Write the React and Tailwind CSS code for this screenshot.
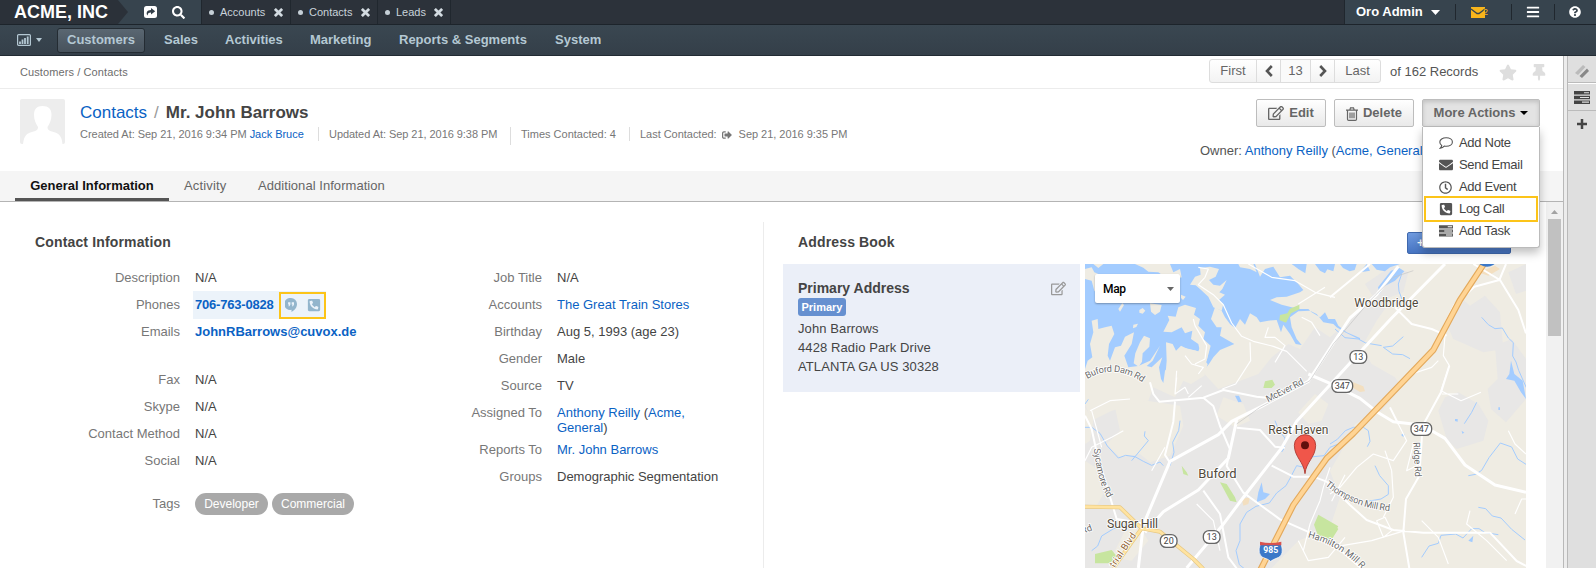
import React from "react";
import {
  FaSearch, FaBars, FaQuestionCircle, FaStar, FaThumbtack, FaRegEdit,
  FaRegClock, FaEnvelope, FaPhoneSquare, FaSignOutAlt,
} from "react-icons/fa";

const TasksIcon = ({ className }) => (
  <svg viewBox="0 0 16 13" className={className} fill="currentColor">
    <path fillRule="evenodd" d="M0 0h16v3.5H0zM10 1.2v1.1h5V1.2zM0 4.7h16v3.5H0zM6 5.9V7h9V5.9zM0 9.4h16v3.5H0zM8 10.6v1.1h7v-1.1z" />
  </svg>
);

const CloseIcon = () => (
  <svg viewBox="0 0 10 10" className="size-[9px] shrink-0 text-[#d3dbe1]" stroke="currentColor" strokeWidth="3">
    <path d="M1 1l8 8M9 1l-8 8" />
  </svg>
);

const ChevronIcon = ({ className }) => (
  <svg viewBox="0 0 8 12" className={className} fill="none" stroke="currentColor" strokeWidth="2.600">
    <path d="M6.800 1L2 6l4.800 5" />
  </svg>
);

const TrashIcon = () => (
  <svg viewBox="0 0 12 14" className="mr-[5px] mt-0.5 h-[14px] w-3" fill="none" stroke="currentColor" strokeWidth="1.200">
    <path d="M0 3.200h12M1.500 3.200v9a1.200 1.200 0 0 0 1.200 1.200h6.600a1.200 1.200 0 0 0 1.200-1.200v-9M3.800 3L4.500.8h3L8.200 3M4 5.500v5.700M6 5.500v5.700M8 5.500v5.700" />
  </svg>
);

const ShareIcon = () => (
  <svg viewBox="0 0 13 12" className="h-3 w-[13px]">
    <rect width="13" height="12" rx="2.5" fill="#fff" />
    <path d="M7 2l4.200 3.200L7 8.400V6.500c-2 0-3.200.6-3.400 3C1.600 7 3 3.900 7 3.900z" fill="#333f49" />
  </svg>
);

const Caret = ({ className }) => (
  <svg viewBox="0 0 8 4" className={className} fill="currentColor" preserveAspectRatio="none"><path d="M0 0h8L4 4z" /></svg>
);

const HangoutsIcon = () => (
  <svg viewBox="0 0 12 14" className="h-[14px] w-3">
    <path d="M6 0a6 6 0 0 1 6 6c0 3.500-2.500 6.500-5.500 8v-2.200A6 6 0 1 1 6 0z" fill="#93b5cc" />
    <path d="M3.100 4.200h2.300v2.400L4.400 8.200h-1l.6-1.600h-.9zM6.700 4.200H9v2.400L8 8.200H7l.6-1.600h-.9z" fill="#ecf3fa" />
  </svg>
);

const PinTab = ({ label, w }) => (
  <div className={`flex h-full items-center border-r border-[#20272e] pl-[7px] ${w}`}>
    <span className="mr-1.5 size-[5px] rounded-full bg-[#c6d0d7]" />
    <span className="flex-1 text-[11px] text-[#c9d3da]">{label}</span>
    <span className="mr-[7px]"><CloseIcon /></span>
  </div>
);

const NavItem = ({ label, w }) => (
  <span className={`shrink-0 whitespace-nowrap text-[13px] font-bold text-[#b4c8d3] ${w}`}>{label}</span>
);

const A = ({ children }) => <a className="text-[#0a62c4]">{children}</a>;

const Row = ({ label, children, h = "h-[27px]" }) => (
  <div className={`flex ${h}`}>
    <span className="w-[145px] shrink-0 pt-1 text-right leading-[15px] text-[#777]">{label}</span>
    <span className="ml-[15px] pt-1 leading-[15px] text-[#444]">{children}</span>
  </div>
);

const Tag = ({ children, w }) => (
  <span className={`flex h-[22px] items-center justify-center rounded-full bg-[#a9a9a9] text-xs text-white ${w}`}>{children}</span>
);

const Shield = ({ x, y, n, w = 50 }) => (
  <g>
    <rect x={x - w / 2} y={y - 19} width={w} height="38" rx="17" fill="#fff" stroke="#666" strokeWidth="4" />
    <text x={x} y={y + 9} textAnchor="middle" fontSize="27" fill="#444" stroke="none">{n}</text>
  </g>
);

const Halo = (p) => <text fill="#51493a" stroke="#fff" strokeWidth="5" paintOrder="stroke" strokeLinejoin="round" {...p} />;

const RoadMap = () => (
  <svg viewBox="0 0 1323 912" className="h-[304px] w-[441px] shrink-0" fontFamily="Roboto, sans-serif">
    <rect width="1323" height="912" fill="#efece3" />
    <g fill="#e8e7e6">
      <path d="M0 420L20 470 80 440 190 410 205 370 270 400 305 330 350 320 400 375 520 330 560 280 610 240 645 255 690 190 735 220 790 170 860 95 910 120 875 170 830 250 860 300 930 340 950 370 890 440 810 480 770 560 735 620 765 700 735 790 640 830 560 912H0z" />
      <path d="M1125 100l30 25 45-30 45 50 10 110-60 10-90-40-20-45zM1230 245l50-20 43 60v120l-60 70-45-40-10-60 30-30zM1060 440l20-40 40-15 60 35 30 50-15 60-80 25-30-30z" />
      <path d="M840 60l80-55 50 20-15 60-80 30zM1270 25l53-25v80l-30 10z" />
    </g>
    <g fill="#efece3">
      <path d="M90 430l95-20 100 15 10 60-40 90-60 20-30-25-60 10-40-40 40-40zM0 430l25 40-10 60-15 10zM415 400l60 20 20 50-45 20-55-35zM0 590l30 20 25 80-20 35-35-5zM690 390l40 30-20 50-40 10-30-35zM120 800l45-10 25 40-50 60-60-10z" />
    </g>
    <path fill="#a3ccff" d="M0 0H510L525 38 540 15 565 8 585 40 615 35 640 60 655 78 645 85 605 98 575 100 555 108 590 122 620 130 645 135 670 135 680 145 705 160 720 145 730 165 750 165 760 185 785 205 825 222V227L780 205 755 190 745 180 715 175 695 150 675 140 640 142 615 160 620 190 635 225 650 243 632 240 615 210 595 182 588 205 575 168 550 170 525 175 515 160 495 148 480 182 465 165 450 192 435 180 420 160 410 140 390 130 378 165 395 190 410 190 405 215 448 240 405 258 385 280 372 300 358 318 365 290 372 255 352 235 340 262 300 252 285 265 290 290 275 300 252 305 240 320 235 357 228 345 222 310 232 280 200 310 185 306 203 290 225 245 195 290 160 306 130 310 118 275 140 240 147 205 120 218 108 245 90 250 75 290 68 275 72 240 88 210 80 185 60 190 40 195 38 165 20 170 25 205 15 240 22 280 8 290 0 315z" />
    <g fill="#efece3">
      <path d="M332 64L315 62 330 38 347 32 345 12 375 8 402 15 392 38 372 48 385 62 405 65 425 48 412 75 403 85 420 92 402 108 415 120 410 140 385 130 370 98 345 75z" />
      <path d="M235 203L253 168 248 155 272 158 280 130 300 122 333 132 327 152 345 165 340 185 360 205 355 225 377 245 365 290 350 285 340 240 318 225 322 200 300 208 290 190 260 205z" />
      <path d="M243 235l20 5 10 20 15-15 20 10 25 5 35 40-10 35-40 25-50-20-28 10 5-60z" />
      <path d="M165 235l12-20 18 8-2 25-20 20-2 25-10 15-15-10 5-30z" />
      <path d="M0 15l20-5 8 15 12 5-5 20 12 5-8 20 15 10-10 15-16-20-8-30-20-5zM150 0h105l10 25 20-10 5 25-35 10-35-25-30-2-15-12zM195 118l35 5-5 20-15 10-12-10zM163 138l10-6 8 8-8 9-10-3zM145 182l14-3-5 10-10 4zM100 135l12-18 5 6-12 20zM25 0h30l-15 12zM288 92l14 6-8 10-6-6z" />
      <path d="M460 0h45l10 25-20-10-30-5z" />
    </g>
    <path fill="#a3ccff" d="M620 0h45l-4 28-20-12zM690 0h60l-5 22-18-6-7 12-15-8zM765 0h50l-6 18-15 4-20-10zM860 0h85l-30 10-15 12-25-5zM825 25l20-25 10 20zM918 20l25-8 15 10-28 28-38 20-8 20-5-20z" />
    <path fill="#c7e59f" d="M585 153l22-5 8-14 28-12v14l-25 12-15 28-20-8z M540 352l22-5 8 15-10 10h-25zM405 655l20 5 25 40 5 15-20-5zM290 605l15 20 5 10-15-5zM700 752l60 35-25 40-30 5-18-50zM30 870l50-12 20 25-30 15-40 0zM735 800l10-20 15 15-25 40z" />
    <path fill="#f3dfc0" d="M470 705l25-5-5 20-15 5zM1180 25l50-20 15 10-35 20zM805 355l30 12 5 15-15 2-25-15z" />
    <g fill="none" stroke="#a3ccff" strokeWidth="3" strokeLinejoin="round">
      <path d="M0 490l20 0 25 18 22 38 33 36 22-8 28 4 25 14 25 12 25-10 10 11M140 590l50-60-12-14 2-14M255 605l12-40-4-30 18-35 4-30M570 470l12 30 18 22-2 30-8 12M760 540l-25 10-18 25-42 4-22 30-18-4-20 38-12 22-28 22-22 30-40 10-28 18-20 35 0 50-12 30 10 42 15 12M1190 160l20 22 20 12 22-2 18 30 15 14-2 40 10 18 8 25 23 52M890 245l-48-8-22-12-40-4-30-26M895 250l28-4 32-28M895 250l28 20 30 2 22 12M1150 635l22-4 18-12 22-38 34-44 34 12 18 36 25 16M1010 880l22-34 28-8 8-24 44-4 22 12 26-28 22 0 18 12 40 6M1180 730l22 4 20 22 26 6 32 34 40 32M870 605l14 30 26 30 0 26-22 14-35 6M735 540l22-14 24-26 24-10 30 0 15 10 5 32-8 16M20 860l18-14 12-30 36-22 54-14M1175 415l-15 30-22 34M950 30l-10 30 2 22 12 32M0 420l10-14" />
    </g>
    <path fill="#a3ccff" d="M530 655l5 30 20 5-15 15-25 10 5-30zM450 395l12 0 8 18-10 2zM1278 290l10 40 25 20 10 55-15-20-20-35-25-5 10-15zM1150 830l15-15-3 20zM1110 465l8 0 0 8-8-2zM1130 500l8 6-6 3zM950 510l8 0 0 8-8-2zM1240 430l5 0 0 8-5 0z" />
    <g fill="none" stroke="#fff" strokeLinejoin="round">
      <g strokeWidth="3.500">
        <path d="M340 10l30 5-10 25-20 22 45 30 30 30 25 55 30 40 35 15 60 15 40 15 60 60M325 165l5 20 35 60-5 40-30 15M300 275l20 25 35 10-15 20M275 320l-5 70 30-20 10 20M490 0l70 40 70 10 60 35 60 15M720 70l-80 50M650 160l30 15 25 40M495 235l2 55-45 70-40 15M550 190l-10 30 30 0 30 25-30 50M0 590l20-40 60-30 35-20M20 440l30 110M15 440l60-30 60-5M270 390l5-50M310 400l40-35M200 620l40-70" />
        <path d="M1080 215l-5 60 18 30-25 75 60 30 60-25M1060 290l-20 20-60 20M1070 390l50 0M940 480l25 50-40 60-60-20-50 40-50 60-30 20M920 620l5 80-30 60M900 560l20 60M740 850l120-20 100-30M1010 770l50 50 30 80M1270 500l20 40 33 30M1155 740l-10 40 60 50 60 60M985 540l20 60-40 20zM875 770l25-10 20 40-25 20zM1290 750l20-45 13 0M735 610l-20 60-10 40-30 70-20 80M740 712l40-80M640 830l30 60 60-10 50-60M335 720l50 50 20 90" />
      </g>
      <g strokeWidth="6">
        <path d="M195 355l10 35 18 23 132-12 60-23 100 20 30 3M0 455l20 40 15 70 60 200 90 15M355 401l30 25 20 60 30 70-10 50 50 80 110 80 90 40 100 60 80 70M455 491l70 7 45 50 30 3M560 605l65 33h60l40 15 70 70 50 45 80 30 90 8h200l80 85 88 45M270 413l-5 60-25 100 13 20M355 680l50 70 25 130 30 40M735 100l60-50 60-50M930 130l50 50 60 15 45 20M1080 213l-2-30 30-60 60-55 75-20 20-48M1165 0l80 48 55 90 23 70M1093 305l-25 80-55 100-10 150-40 70-8 100 20 120M915 430l25 50" />
      </g>
      <g strokeWidth="9">
        <path d="M305 912l105-125 75-100 105-135 45-80 165-180 120-130L1080 0M160 912l15-130 80-190 145-80 40-40 90-45 140-75 85-130 40-60 80-70 65-85M180 805l55-62 105-65 90-95 25-115M670 330l65 28 90 45 50 40 50 30 85 10 70 40 60 80 90 60 93 22" />
      </g>
    </g>
    <g fill="none" stroke="#c6c6c6" strokeWidth="2">
      <path d="M455 480l70-50 150-80 70-110 110-130 70-70 60-20" />
    </g>
    <g fill="none" strokeLinejoin="round">
      <path d="M0 728l105 2 65 63 55 10 100 82 30 30M170 793l-85 119" stroke="#e7c883" strokeWidth="12" />
      <path d="M0 728l105 2 65 63 55 10 100 82 30 30M170 793l-85 119" stroke="#ffe3a0" strokeWidth="8" />
      <path d="M525 920L625 723 725 583 805 508 1045 258 1125 108 1200-5" stroke="#e3a95c" strokeWidth="19" />
      <path d="M525 920L625 723 725 583 805 508 1045 258 1125 108 1200-5" stroke="#ffd494" strokeWidth="12" />
    </g>
    <ellipse cx="1206" cy="-8" rx="26" ry="16" fill="#3b78c8" />
    <defs>
      <path id="dam" d="M7 345Q90 295 182 362" />
      <path id="mill" d="M720 664Q810 738 935 742" />
      <path id="ham" d="M668 820Q765 845 830 915" />
      <path id="syc" d="M26 554Q38 660 74 712" />
    </defs>
    <g fontSize="28">
      <Halo fill="#6b6b6b"><textPath href="#dam" textLength="176">Buford Dam Rd</textPath></Halo>
      <Halo fill="#6b6b6b"><textPath href="#mill" textLength="212">Thompson Mill Rd</textPath></Halo>
      <Halo fill="#6b6b6b"><textPath href="#ham">Hamilton Mill Rd</textPath></Halo>
      <Halo fill="#6b6b6b"><textPath href="#syc" textLength="155">Sycamore Rd</textPath></Halo>
      <Halo fill="#6b6b6b" transform="translate(549 415) rotate(-27)" textLength="122">McEver Rd</Halo>
      <Halo fill="#6b6b6b" transform="translate(985 535) rotate(87)" textLength="104">Ridge Rd</Halo>
      <Halo fill="#6b6b6b" transform="translate(-8 810) rotate(-20)">Rd</Halo>
      <Halo fill="#8f5f33" transform="translate(88 912) rotate(-56)" textLength="118">trial Blvd</Halo>
    </g>
    <Halo x="808" y="130" fontSize="36" textLength="192">Woodbridge</Halo>
    <Halo x="550" y="511" fontSize="36" textLength="180">Rest Haven</Halo>
    <Halo x="340" y="643" fontSize="39" textLength="115">Buford</Halo>
    <Halo x="66" y="792" fontSize="37" textLength="153">Sugar Hill</Halo>
    <Shield x={820} y={279} n="13" />
    <Shield x={772} y={366} n="347" w={62} />
    <Shield x={1009} y={495} n="347" w={62} />
    <Shield x={251} y={831} n="20" />
    <Shield x={380} y={819} n="13" />
    <path d="M525 842q32-8 64 0 8 30-8 38-20 8-24 12-6-6-24-12-16-10-8-38z" fill="#3b78c8" stroke="#fff" strokeWidth="2" />
    <path d="M525 833q32 8 64 0v11h-64z" fill="#d9534f" />
    <text x="557" y="868" textAnchor="middle" fontSize="26" fontWeight="700" fill="#fff">985</text>
    <path d="M660 629c-3-35-32-50-32-85a32 32 0 0 1 64 0c0 35-29 50-32 85z" fill="#f0564a" stroke="#a8322a" strokeWidth="2.500" />
    <circle cx="660" cy="544" r="12" fill="#5f100c" />
  </svg>
);

const MenuItem = ({ icon, children, hot }) => (
  <div className={`flex h-[22px] items-center ${hot ? "mx-[3px] pl-3 outline-2 outline-[#fcc419]" : "mx-px pl-3.5"}`}>
    <span className="mr-1.5 flex w-[15px] justify-center text-[#555]">{icon}</span>
    <span className="whitespace-nowrap text-[13px] tracking-[-0.3px] text-[#444]">{children}</span>
  </div>
);

const btn = "flex h-7 items-center justify-center rounded-[2px] border border-[#bdbdbd] bg-gradient-to-b from-white to-[#e9e9e9] text-[13px] font-bold text-[#666]";

export default function App() {
  return (
    <div className="flex h-[568px] w-[1596px] flex-col overflow-hidden bg-white font-['Liberation_Sans',Arial,sans-serif] text-[13px] text-[#444]">
      <header className="shrink-0">
        <div className="flex h-[25px] items-stretch border-b border-[#1d242b] bg-[#2c323a]">
          <div className="flex w-[201px] items-center bg-[#37444e]">
            <svg viewBox="0 0 128 24" className="-mr-[128px] h-6 w-[128px] shrink-0"><path d="M0 0h118l10 12-10 12H0z" fill="#2b3139" /></svg>
            <span className="relative w-[144px] whitespace-nowrap pl-3.5 text-[18px] font-bold leading-6 text-white">ACME, INC</span>
            <ShareIcon />
            <FaSearch className="ml-[15px] size-[13px] text-white" />
          </div>
          <div className="flex border-l border-[#20272e]">
            <PinTab label="Accounts" w="w-[89px]" />
            <PinTab label="Contacts" w="w-[87px]" />
            <PinTab label="Leads" w="w-[73px]" />
          </div>
          <div className="flex-1" />
          <div className="flex w-[252px] items-center border-l border-[#20272e] bg-[#37444e]">
            <span className="ml-[11px] w-[75px] whitespace-nowrap font-bold text-white">Oro Admin</span>
            <Caret className="h-[5px] w-[9px] text-white" />
            <span className="ml-[15px] h-4 w-px bg-[#20272e]" />
            <span className="ml-[15px] flex w-10 items-center">
              <svg viewBox="0 0 14 11" className="h-[11px] w-[14px]">
                <path d="M0 0h14v11H0z" fill="#f9b51b" />
                <path d="M0 2l6 4.500h2L14 2" fill="none" stroke="#37444e" strokeWidth="1.300" />
              </svg>
              <span className="-ml-0.5 text-[9px] leading-none text-[#f9b51b]">2</span>
            </span>
            <span className="h-4 w-px bg-[#20272e]" />
            <FaBars className="ml-3.5 size-[14px] text-white" />
            <span className="ml-3.5 h-4 w-px bg-[#20272e]" />
            <FaQuestionCircle className="ml-3.5 size-3 text-white" />
          </div>
        </div>
        <div className="flex h-[31px] items-center border-b border-[#222b33] bg-gradient-to-b from-[#3a4751] to-[#343f49]">
          <svg viewBox="0 0 14 12" className="ml-[17px] h-3 w-[14px] text-[#b4c8d3]" fill="none" stroke="currentColor">
            <rect x=".6" y=".6" width="12.800" height="10.800" rx="1" strokeWidth="1.200" />
            <path d="M3 10V7.500M5.500 10V5.500M8 10V4M10.700 10V2.500" strokeWidth="1.800" />
          </svg>
          <Caret className="ml-[5px] h-1 w-1.5 text-[#b4c8d3]" />
          <span className="ml-[15px] mr-[19px] flex h-[25px] w-[88px] items-center justify-center rounded-[3px] border border-[#242c33] bg-gradient-to-b from-[#5a6772] to-[#47525c] font-bold text-[#b4c8d3]">Customers</span>
          <NavItem label="Sales" w="w-[61px]" />
          <NavItem label="Activities" w="w-[85px]" />
          <NavItem label="Marketing" w="w-[89px]" />
          <NavItem label="Reports & Segments" w="w-[156px]" />
          <NavItem label="System" w="w-[60px]" />
        </div>
      </header>

      <div className="flex min-h-0 flex-1">
        <main className="flex min-w-0 flex-1 flex-col">
          <div className="flex h-[33px] shrink-0 items-center border-b border-[#ececec] pl-5">
            <span className="flex-1 text-[11px] tracking-[0.1px] text-[#6d6d6d]">Customers / Contacts</span>
            <div className="-mt-0.5 flex h-6 items-stretch rounded-[3px] border border-[#ddd] bg-gradient-to-b from-white to-[#f3f3f3] text-[#666]">
              <span className="flex w-[47px] items-center justify-center border-r border-[#ddd]">First</span>
              <span className="flex w-6 items-center justify-center border-r border-[#ddd] text-[#555]"><ChevronIcon className="h-3 w-2" /></span>
              <span className="flex w-[30px] items-center justify-center border-r border-[#ddd] bg-[#fafafa]">13</span>
              <span className="flex w-6 items-center justify-center border-r border-[#ddd] text-[#555]"><ChevronIcon className="h-3 w-2 -scale-x-100" /></span>
              <span className="flex w-[45px] items-center justify-center">Last</span>
            </div>
            <span className="ml-[9px] w-[109px] whitespace-nowrap text-[#555]">of 162 Records</span>
            <FaStar className="h-[17px] w-[18px] text-[#dedede]" />
            <FaThumbtack className="ml-[15px] mr-[17px] h-[17px] w-[14px] text-[#dedede]" />
          </div>

          <div className="flex h-[82px] shrink-0 pl-5 pt-2.5">
            <svg viewBox="0 0 45 45" className="size-[45px] shrink-0 rounded-[2px] bg-[#ededed]">
              <path d="M22.500 7c6 0 9 3 9 9 0 5-2 9-4 12 0 3 2 4 6 5 5 1.500 8 3 9 12H3c1-9 4-10.500 9-12 4-1 6-2 6-5-2-3-4-7-4-12 0-6 3-9 8.500-9z" fill="#fff" />
            </svg>
            <div className="ml-[15px] flex-1">
              <h1 className="mt-1 flex h-[19px] items-center whitespace-nowrap text-[17px] leading-[19px]">
                <A>Contacts</A><span className="mx-[7px] text-[#999]">/</span><b className="text-[#444]">Mr. John Barrows</b>
              </h1>
              <div className="mt-[5px] flex h-5 items-start whitespace-nowrap text-[11px] leading-[15px] text-[#777]">
                <span className="w-[238px] tracking-[-0.030px]">Created At: Sep 21, 2016 9:34 PM <A>Jack Bruce</A></span>
                <span className="h-3.5 w-px bg-[#ddd]" />
                <span className="w-[191px] pl-2.5 tracking-[-0.050px]">Updated At: Sep 21, 2016 9:38 PM</span>
                <span className="h-[18px] w-px bg-[#ddd]" />
                <span className="w-[118px] pl-2.5">Times Contacted: 4</span>
                <span className="h-3.5 w-px bg-[#ddd]" />
                <span className="flex items-center pl-2.5 tracking-[-0.030px]">Last Contacted: <FaSignOutAlt className="ml-[5px] mr-[7px] size-[10px]" /> Sep 21, 2016 9:35 PM</span>
              </div>
            </div>
            <div className="mr-[23px] flex w-[340px] flex-col">
              <div className="flex justify-end gap-2">
                <span className={`${btn} w-[70px]`}><FaRegEdit className="mr-[5px] size-4" />Edit</span>
                <span className={`${btn} w-20`}><TrashIcon />Delete</span>
                <div className="relative">
                  <span className="flex h-7 w-[118px] items-center justify-center gap-[5px] whitespace-nowrap rounded-[2px] border border-[#bdbdbd] bg-[#e3e3e3] font-bold text-[#666] shadow-[inset_0_2px_4px_rgba(0,0,0,0.15)]">
                    More Actions<Caret className="h-1 w-2 text-black" />
                  </span>
                  <div className="absolute left-0 top-7 z-10 h-[121px] w-[118px] rounded-b-[3px] border border-t-0 border-[#bbb] bg-white pt-[5px] shadow-[0_5px_10px_rgba(0,0,0,0.25)]">
                    <MenuItem icon={
                      <svg viewBox="0 0 14 12" className="h-3 w-[14px]" fill="none" stroke="currentColor" strokeWidth="1.100"><path d="M7.200.7c3.600 0 6.200 1.900 6.200 4.300s-2.600 4.300-6.200 4.300c-.7 0-1.300-.1-1.900-.2C4.200 10.300 2.800 11 1.300 11.200c.8-.8 1.300-1.600 1.400-2.800C1.500 7.600.8 6.400.8 5 .8 2.600 3.600.7 7.200.7z" /></svg>
                    }>Add Note</MenuItem>
                    <MenuItem icon={<FaEnvelope className="size-[14px]" />}>Send Email</MenuItem>
                    <MenuItem icon={<FaRegClock className="size-[13px]" />}>Add Event</MenuItem>
                    <MenuItem hot icon={<FaPhoneSquare className="size-[14px] -scale-x-100" />}>Log Call</MenuItem>
                    <MenuItem icon={<TasksIcon className="h-3 w-[14px]" />}>Add Task</MenuItem>
                  </div>
                </div>
              </div>
              <span className="mt-3.5 whitespace-nowrap text-[#555]">Owner: <A>Anthony Reilly</A> (<A>Acme, General</A>)</span>
            </div>
          </div>

          <div className="flex h-[31px] shrink-0 items-stretch border-b border-[#b4b4b4] bg-[#f5f5f5] pl-[15px] leading-[29px] text-[#666]">
            <b className="w-[154px] border-b-[3px] border-[#555] text-center leading-[29px] text-[#111]">General Information</b>
            <span className="ml-[15px] w-[74px] tracking-[0.15px]">Activity</span>
            <span className="tracking-[0.05px]">Additional Information</span>
          </div>

          <div className="flex min-h-0 flex-1">
            <div className="flex min-w-0 flex-1 pt-5">
              <section className="flex w-[763px] shrink-0 flex-col pl-[35px]">
                <h2 className="mt-3 h-[17px] text-[14px] font-bold leading-[17px] tracking-[0.15px]">Contact Information</h2>
                <div className="mt-[15px] flex">
                  <div className="w-[362px]">
                    <Row label="Description">N/A</Row>
                    <div className="flex h-[27px]">
                      <span className="w-[145px] pt-1 text-right leading-[15px] text-[#777]">Phones</span>
                      <span className="-mt-0.5 ml-[13px] flex h-7 items-center bg-[#ecf3fa] pl-0.5">
                        <b className="w-[84px] tracking-[-0.2px] text-[#0a62c4]">706-763-0828</b>
                        <span className="flex h-[27px] w-[47px] items-center gap-2.5 border-2 border-[#fcc419] pl-1">
                          <HangoutsIcon /><FaPhoneSquare className="size-[14px] -scale-x-100 text-[#93b5cc]" />
                        </span>
                      </span>
                    </div>
                    <Row label="Emails" h="h-12"><b className="text-[#0a62c4]">JohnRBarrows@cuvox.de</b></Row>
                    <Row label="Fax">N/A</Row>
                    <Row label="Skype">N/A</Row>
                    <Row label="Contact Method">N/A</Row>
                    <Row label="Social" h="h-11">N/A</Row>
                    <div className="flex items-center">
                      <span className="mr-[15px] w-[145px] text-right text-[#777]">Tags</span>
                      <div className="flex gap-1"><Tag w="w-[73px]">Developer</Tag><Tag w="w-[82px]">Commercial</Tag></div>
                    </div>
                  </div>
                  <div>
                    <Row label="Job Title">N/A</Row>
                    <Row label="Accounts"><A>The Great Train Stores</A></Row>
                    <Row label="Birthday">Aug 5, 1993 (age 23)</Row>
                    <Row label="Gender">Male</Row>
                    <Row label="Source">TV</Row>
                    <Row label="Assigned To" h="h-[37px]"><A>Anthony Reilly</A> (<A>Acme,<br />General</A>)</Row>
                    <Row label="Reports To"><A>Mr. John Barrows</A></Row>
                    <Row label="Groups">Demographic Segmentation</Row>
                  </div>
                </div>
              </section>
              <section className="flex w-[783px] flex-col border-l border-[#ececec] pl-[19px]">
                <div className="mt-2.5 flex h-8 items-start">
                  <h2 className="ml-[15px] mt-0.5 w-[609px] text-[14px] font-bold leading-[17px] tracking-[0.15px]">Address Book</h2>
                  <span className="flex h-[22px] w-[104px] items-center justify-center whitespace-nowrap rounded-[2px] border border-[#3f68ad] bg-gradient-to-b from-[#6f9adf] to-[#4674c2] text-[12px] font-bold text-white">+ Add Address</span>
                </div>
                <div className="flex items-start gap-[5px]">
                  <div className="flex h-32 w-[297px] flex-col bg-[#ebeff8] pl-[15px] pt-[15px]">
                    <div className="mb-px flex h-[18px] items-center">
                      <b className="w-[253px] text-[14px] leading-[17px]">Primary Address</b>
                      <FaRegEdit className="size-[15px] text-[#999]" />
                    </div>
                    <span className="flex h-[18px] w-12 items-center justify-center rounded-[3px] bg-[#6690d0] text-[11px] font-bold text-white">Primary</span>
                    <div className="mt-[3px] leading-[19px] tracking-[0.1px]">John Barrows<br />4428 Radio Park Drive<br />ATLANTA GA US 30328</div>
                  </div>
                  <div className="relative">
                    <RoadMap />
                    <div className="absolute left-2.5 top-2.5 flex h-[29px] w-[85px] items-center rounded-[2px] bg-white pl-2 pr-1.5 font-['Roboto',sans-serif] text-[12px] font-medium tracking-[-0.3px] text-black shadow-[0_1px_2px_rgba(0,0,0,0.3)]">
                      <span className="flex-1">Map</span><Caret className="h-1 w-[7px] text-[#666]" />
                    </div>
                  </div>
                </div>
              </section>
            </div>
            <div className="flex w-[17px] shrink-0 flex-col items-center bg-[#f1f1f1]">
              <Caret className="mt-[8px] h-1 w-[7px] rotate-180 text-[#a3a3a3]" />
              <span className="mt-[5px] h-[117px] w-[13px] bg-[#c1c1c1]" />
            </div>
          </div>
        </main>
        <div className="w-[5px] shrink-0 border-x border-[#b9b9b9] bg-[#ececec]" />
        <aside className="flex w-7 shrink-0 flex-col items-center bg-[#dfdfdf] text-[#444]">
          <div className="flex h-[27px] w-full items-center justify-center border-b border-[#bbb]">
            <svg viewBox="0 0 14 14" className="mt-1 size-[14px]"><path d="M0 9L8 1l2.500 2L3 11z" fill="#bbb" /><path d="M4.500 12L12 4.500 14 7l-7 7z" fill="#888" /></svg>
          </div>
          <div className="flex h-7 w-full items-center justify-center border-b border-t border-b-[#bbb] border-t-white"><TasksIcon className="h-[13px] w-4" /></div>
          <svg viewBox="0 0 10 10" className="mt-2 size-2.5" stroke="currentColor" strokeWidth="2.500"><path d="M5 0v10M0 5h10" /></svg>
        </aside>
      </div>
    </div>
  );
}
